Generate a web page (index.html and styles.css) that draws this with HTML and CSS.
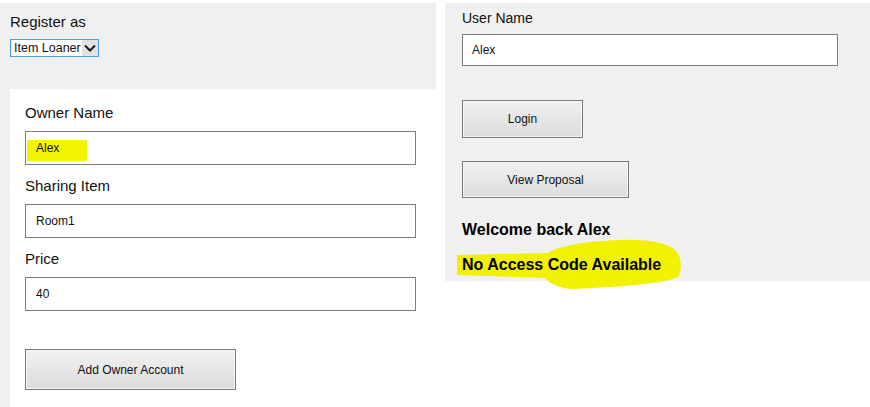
FILE: index.html
```html
<!DOCTYPE html>
<html>
<head>
<meta charset="utf-8">
<link rel="stylesheet" href="styles.css">
</head>
<body>
<div class="page">
  <section class="left">
    <div class="register">
      <div class="reg-label">Register as</div>
      <div class="select">
        <span class="select-text">Item Loaner</span>
        <span class="select-arrow"><svg width="12" height="8" viewBox="0 0 12 8"><path d="M1 1.5 L6 6.5 L11 1.5" fill="none" stroke="#1a1a1a" stroke-width="2"/></svg></span>
      </div>
    </div>
    <div class="card">
      <div class="group">
        <div class="label">Owner Name</div>
        <div class="field"><span class="mark"></span><span class="val">Alex</span></div>
      </div>
      <div class="group">
        <div class="label">Sharing Item</div>
        <div class="field"><span class="val">Room1</span></div>
      </div>
      <div class="group">
        <div class="label">Price</div>
        <div class="field"><span class="val">40</span></div>
      </div>
      <button class="btn btn-add">Add Owner Account</button>
    </div>
  </section>
  <section class="right">
    <svg class="blob" width="250" height="295" viewBox="0 0 250 295"><path d="M12,252 L103,250 C115,242 145,238 175,237 C205,236 223,240 231,248 C237,254 237,268 233,274 C215,282 165,284 130,286 C115,286 105,281 100,275 L12,272 Z" fill="#f2f200"/></svg>
    <div class="label-sm">User Name</div>
    <div class="field field-r"><span class="val">Alex</span></div>
    <button class="btn btn-login">Login</button>
    <button class="btn btn-view">View Proposal</button>
    <div class="welcome">Welcome back Alex</div>
    <div class="noaccess">No Access Code Available</div>
  </section>
</div>
</body>
</html>
```

FILE: styles.css
```css
* { box-sizing: border-box; }
html, body { margin: 0; padding: 0; background: #ffffff; }
body {
  font-family: "Liberation Sans", Arial, sans-serif;
  color: #111111;
}
.page {
  display: flex;
  align-items: flex-start;
  padding-top: 3px;
  height: 407px;
  overflow: hidden;
}
.left {
  width: 436px;
  align-self: stretch;
  background: #f0f0f0;
  display: flex;
  flex-direction: column;
}
.register {
  height: 86px;
  padding: 10px 0 0 10px;
}
.reg-label {
  font-size: 15px;
  line-height: 17px;
}
.select {
  margin-top: 9px;
  width: 89px;
  height: 18px;
  border: 1px solid #4aa0e6;
  background: #ffffff;
  display: flex;
  align-items: stretch;
}
.select-text {
  flex: 1;
  min-width: 0;
  overflow: hidden;
  font-size: 12.5px;
  line-height: 16px;
  padding-left: 3px;
  white-space: nowrap;
}
.select-arrow {
  flex-shrink: 0;
  width: 16px;
  background: #e2e2e2;
  display: flex;
  align-items: center;
  justify-content: center;
}
.card {
  flex: 1;
  margin-left: 10px;
  background: #ffffff;
  padding: 15px 0 0 15px;
}
.group { margin-bottom: 12px; }
.label {
  font-size: 15px;
  line-height: 17px;
  margin-bottom: 10px;
}
.field {
  position: relative;
  width: 391px;
  height: 34px;
  border: 1px solid #7c7c7c;
  background: #ffffff;
  display: flex;
  align-items: center;
  padding-left: 10px;
  font-size: 12px;
}
.val { position: relative; z-index: 1; }
.mark {
  position: absolute;
  left: 1px;
  top: 8px;
  width: 60px;
  height: 21px;
  background: #f4f400;
}
.btn {
  display: block;
  font-family: "Liberation Sans", Arial, sans-serif;
  font-size: 12px;
  color: #111111;
  border: 1px solid #7a7a7a;
  background: linear-gradient(#f1f1f1, #dcdcdc);
  box-shadow: inset 0 0 0 1px #f6f6f6;
  padding: 0;
}
.btn-add {
  margin-top: 38px;
  width: 211px;
  height: 41px;
}
.right {
  position: relative;
  margin-left: 9px;
  width: 425px;
  height: 278px;
  background: #f0f0f0;
  padding: 7px 0 0 17px;
}
.blob {
  position: absolute;
  left: 0;
  top: 0;
  overflow: visible;
}
.label-sm {
  position: relative;
  font-size: 14px;
  line-height: 16px;
}
.field-r {
  margin-top: 8px;
  width: 376px;
  height: 32px;
  padding-left: 9px;
}
.btn-login {
  margin-top: 34px;
  width: 121px;
  height: 38px;
}
.btn-view {
  margin-top: 23px;
  width: 167px;
  height: 37px;
}
.welcome, .noaccess {
  position: relative;
  z-index: 1;
  font-size: 16px;
  line-height: 18px;
  font-weight: bold;
  color: #000000;
}
.welcome { margin-top: 23px; }
.noaccess { margin-top: 17px; }
```
